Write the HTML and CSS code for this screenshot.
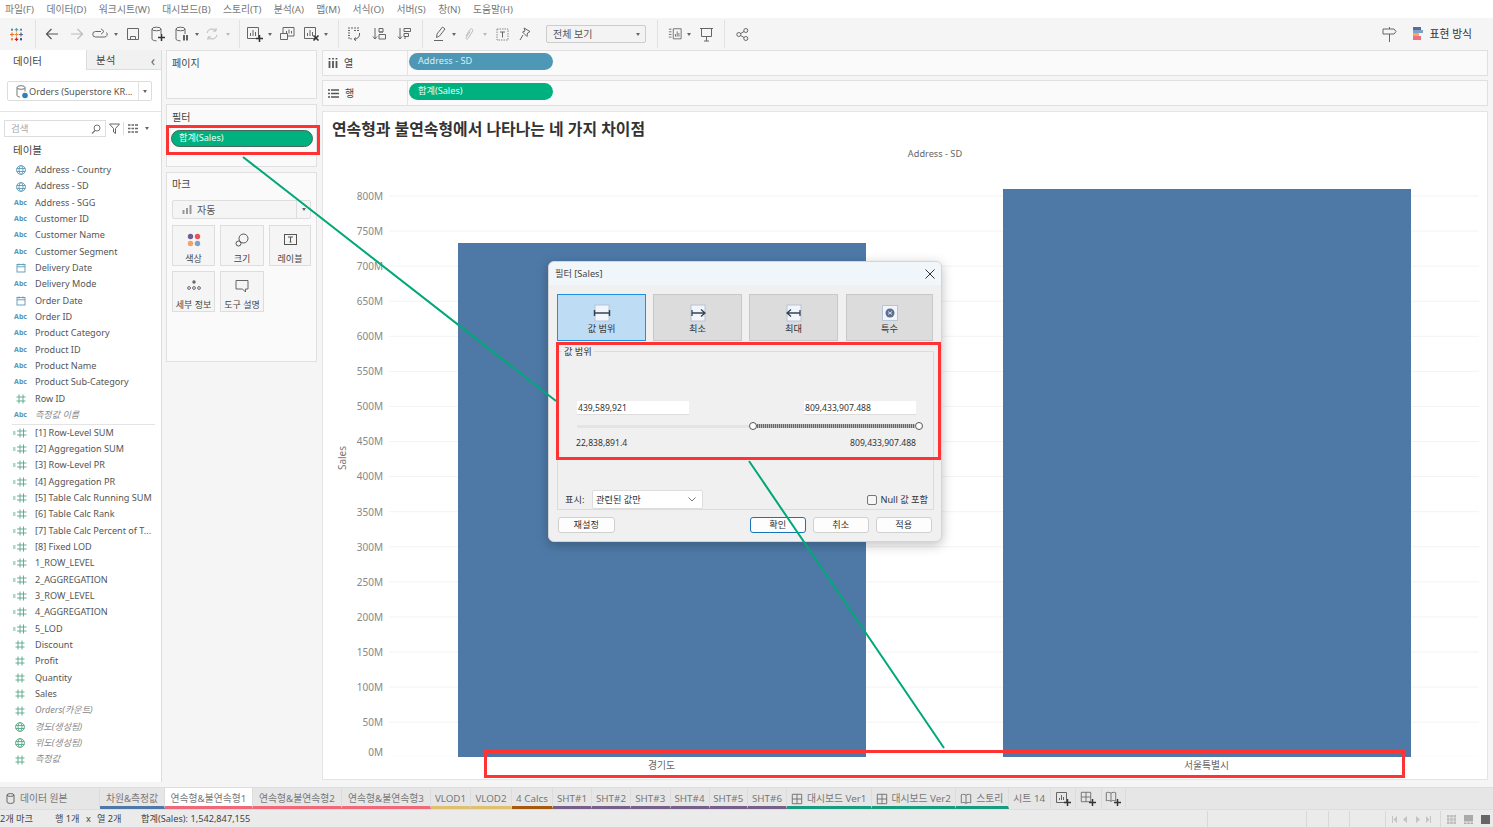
FILE: index.html
```html
<!DOCTYPE html>
<html lang="ko">
<head>
<meta charset="utf-8">
<title>Tableau</title>
<link rel="stylesheet" href="styles.css">
</head>
<body>
<svg class="defs" width="0" height="0">
  <defs>
    <symbol id="hash" viewBox="0 0 10 10"><path d="M3 .5v9M7 .5v9M.5 3h9M.5 7h9" fill="none" stroke="currentColor" stroke-width=".9"/></symbol>
    <symbol id="calc" viewBox="0 0 14 10"><path d="M0 4h2.500M0 6h2.500" stroke="#58b08c" stroke-width="1"/><path d="M7 .5v9M10.500 .5v9M4 3h9.500M4 7h9.500" fill="none" stroke="currentColor" stroke-width=".9"/></symbol>
    <symbol id="globe" viewBox="0 0 10 10"><g fill="none" stroke="currentColor" stroke-width=".9"><circle cx="5" cy="5" r="4.400"/><ellipse cx="5" cy="5" rx="2" ry="4.400"/><path d="M.6 3.500h8.800M.6 6.500h8.800"/></g></symbol>
    <symbol id="cal" viewBox="0 0 10 10"><g fill="none" stroke="currentColor" stroke-width=".9"><rect x="1" y="1.500" width="8" height="7.500"/><path d="M1 3.800h8M3 .5v2M7 .5v2"/></g></symbol>
    <symbol id="db" viewBox="0 0 16 16"><g fill="none" stroke="#666" stroke-width="1"><ellipse cx="6.500" cy="3" rx="4.500" ry="1.800"/><path d="M2 3v10c0 1 2 1.800 4.500 1.800M11 3v5"/></g></symbol>
    <symbol id="grid" viewBox="0 0 14 14"><path d="M1.500 1.500h11v11h-11zM1.500 7h11M7 1.500v11" fill="none" stroke="#666"/></symbol>
    <symbol id="plus" viewBox="0 0 7 7"><path d="M3.500 0v7M0 3.500h7" stroke="#333" stroke-width="1.500"/></symbol>
    <symbol id="book" viewBox="0 0 14 14"><path d="M1.500 2c2-.8 4-.6 5.500.6C8.500 1.400 10.500 1.200 12.500 2v9.500c-2-.8-4-.6-5.500.6-1.500-1.200-3.500-1.400-5.500-.6zM7 2.600v9.500" fill="none" stroke="#666"/></symbol>
  </defs>
</svg>

<div class="app">
  <nav class="menu">
    <span>파일(F)</span><span>데이터(D)</span><span>워크시트(W)</span><span>대시보드(B)</span><span>스토리(T)</span><span>분석(A)</span><span>맵(M)</span><span>서식(O)</span><span>서버(S)</span><span>창(N)</span><span>도움말(H)</span>
  </nav>

  <div class="toolbar">
    <div class="tools">
      <span class="t"><svg width="15" height="15" viewBox="0 0 15 15"><g stroke-width="1.200" fill="none"><path d="M7.500 1v3.500M5.800 2.700h3.400" stroke="#7099a6"/><path d="M7.500 10.500V14M5.800 12.300h3.400" stroke="#c72037"/><path d="M3 5.500v4M1 7.500h4" stroke="#e8762c"/><path d="M12 5.500v4M10 7.500h4" stroke="#5b6591"/><path d="M7.500 5.500v4M5.500 7.500h4" stroke="#eb912b"/><path d="M3 1.500v2.500M2 2.700h2M12 1.500v2.500M11 2.700h2" stroke="#59879b"/><path d="M3 11v2.500M2 12.200h2" stroke="#e8762c"/><path d="M12 11v2.500M11 12.200h2" stroke="#1f447e"/></g></svg></span>
      <span class="t"><i class="sep"></i></span>
      <span class="t"><svg width="14" height="14" viewBox="0 0 14 14"><path d="M13 7H1.500M6.500 2l-5 5 5 5" fill="none" stroke="#555" stroke-width="1.200"/></svg></span>
      <span class="t"><svg width="14" height="14" viewBox="0 0 14 14"><path d="M1 7h11.500M7.500 2l5 5-5 5" fill="none" stroke="#bbb" stroke-width="1.200"/></svg></span>
      <span class="t"><svg width="16" height="12" viewBox="0 0 16 12"><path d="M9 3.500H3.500a2.700 2.700 0 0 0 0 5.500h9a2.700 2.700 0 0 0 2-4.500M9 .8l3 2.700-3 2.700" fill="none" stroke="#666"/></svg></span>
      <span class="t"><b class="caret"></b></span>
      <span class="t"><svg width="14" height="14" viewBox="0 0 14 14"><path d="M1.500 1.500h11v11h-11zM4.500 12.500V9.500h5v3" fill="none" stroke="#666"/></svg></span>
      <span class="t"><svg width="16" height="16" viewBox="0 0 16 16"><use href="#db" width="16" height="16"/><use href="#plus" x="8" y="8" width="7" height="7"/></svg></span>
      <span class="t"><svg width="16" height="16" viewBox="0 0 16 16"><use href="#db" width="16" height="16"/><path d="M10 9v5.500M13 9v5.500" stroke="#333" stroke-width="1.500"/></svg></span>
      <span class="t"><b class="caret"></b></span>
      <span class="t"><svg width="14" height="14" viewBox="0 0 14 14"><path d="M2 6a5 5 0 0 1 9-2M12 8a5 5 0 0 1-9 2M11 1v3H8M3 13v-3h3" fill="none" stroke="#bbb"/></svg></span>
      <span class="t"><b class="caret light"></b></span>
      <span class="t"><i class="sep"></i></span>
      <span class="t"><svg width="17" height="16" viewBox="0 0 17 16"><path d="M1.500 1.500h11v11h-11zM4.500 10V7M7 10V4M9.500 10V6" fill="none" stroke="#666"/><use href="#plus" x="10" y="9" width="7" height="7"/></svg></span>
      <span class="t"><b class="caret"></b></span>
      <span class="t"><svg width="15" height="14" viewBox="0 0 15 14"><path d="M.5 6.500h7v6h-7zM3 6.500V.5h11v8.500H7.500M6.500 6V4M9 6.500V2.500M11.500 6.500V4" fill="none" stroke="#666"/></svg></span>
      <span class="t"><svg width="17" height="16" viewBox="0 0 17 16"><path d="M1.500 1.500h11v11h-11zM4.500 10V7M7 10V4M9.500 10V6" fill="none" stroke="#666"/><path d="M10.500 9.500l5 5M15.500 9.500l-5 5" stroke="#333" stroke-width="1.600"/></svg></span>
      <span class="t"><b class="caret"></b></span>
      <span class="t"><i class="sep"></i></span>
      <span class="t"><svg width="14" height="14" viewBox="0 0 14 14"><path d="M1 1h2M4 1h2M7 1h2M10 1h2M1 3.500h2M7 3.500h2M10 3.500h2M1 6h2M1 8.500h2M1 11h2" fill="none" stroke="#666"/><path d="M12.500 6c.5 3-1.500 6-5 6.200M9 10.500l-2 1.700 2 1.500M4 11v1.500" fill="none" stroke="#555"/></svg></span>
      <span class="t"><svg width="14" height="14" viewBox="0 0 14 14"><path d="M3 1v11M1 9.500l2 2.500 2-2.500M7 1.500h4v3.500H7zM7 5h4M7 7.500h6.500v4.500H7z" fill="none" stroke="#666"/></svg></span>
      <span class="t"><svg width="14" height="14" viewBox="0 0 14 14"><path d="M3 1v11M1 9.500l2 2.500 2-2.500M7 1.500h6.500v3H7zM7 6.500h4.500v3H7zM7 11h2" fill="none" stroke="#666"/></svg></span>
      <span class="t"><i class="sep"></i></span>
      <span class="t"><svg width="14" height="16" viewBox="0 0 14 16"><path d="M3.500 11.500l.5-3.500 5.500-7 2.500 2-5.500 7zM1 14.500h9" fill="none" stroke="#666"/></svg></span>
      <span class="t"><b class="caret"></b></span>
      <span class="t"><svg width="12" height="15" viewBox="0 0 12 15"><path d="M3 9l4-6.500c1-1.500 3.500-.2 2.700 1.500L5 11.500c-.8 1.200-2.500.2-1.800-1L7 4.500" fill="none" stroke="#bbb"/></svg></span>
      <span class="t"><b class="caret light"></b></span>
      <span class="t"><svg width="13" height="13" viewBox="0 0 13 13"><path d="M1 1h11v11H1z" fill="none" stroke="#888" stroke-dasharray="1.500 1"/><path d="M4 4h5M6.500 4v5.500" fill="none" stroke="#666"/></svg></span>
      <span class="t"><svg width="13" height="14" viewBox="0 0 13 14"><path d="M5 1l6 3.500-2.500 1.500-.5 3.500-4.500-4.500 2.500-1zM4 8l-3 5" fill="none" stroke="#666"/></svg></span>
      <span class="t view"><span class="viewsel"><span class="viewtxt">전체 보기</span><b class="caret"></b></span></span>
      <span class="t"><i class="sep"></i></span>
      <span class="t"><svg width="16" height="14" viewBox="0 0 16 14"><path d="M1 1.500h3M1 4.500h3M1 7.500h3M1 10.500h3M6 1h9v11.500H6zM8.500 10V7M10.500 10V4M12.500 10V6" fill="none" stroke="#666"/></svg></span>
      <span class="t"><b class="caret"></b></span>
      <span class="t"><svg width="15" height="15" viewBox="0 0 15 15"><path d="M1 1.500h13M2.500 1.500v8h10v-8M7.500 9.500v4.500M5 14h5" fill="none" stroke="#666"/></svg></span>
      <span class="t"><i class="sep"></i></span>
      <span class="t"><svg width="13" height="13" viewBox="0 0 13 13"><g fill="none" stroke="#666"><circle cx="2.800" cy="6.500" r="2"/><circle cx="9.800" cy="2.500" r="2"/><circle cx="9.800" cy="10.500" r="2"/><path d="M4.600 5.500l3.400-2M4.600 7.500l3.400 2"/></g></svg></span>
    </div>
    <div class="tools-right">
      <svg width="15" height="15" viewBox="0 0 15 15"><path d="M7.500 0v2M1 2h11l2 2.500-2 2.500H1zM7.500 7v8" fill="none" stroke="#666"/></svg>
      <span class="showme">
        <svg width="11" height="14" viewBox="0 0 11 14"><rect width="8" height="3" fill="#5b6a9a"/><rect y="3" width="10" height="3" fill="#7da1c4"/><rect y="6" width="6" height="3" fill="#f0a76f"/><rect y="9" width="8" height="4" fill="#ee6f7e"/></svg>
        <span>표현 방식</span>
      </span>
    </div>
  </div>

  <div class="main">
    <aside class="datapane">
      <div class="dtabs">
        <span class="dtab on">데이터</span>
        <span class="dtab off">분석<b class="chev">‹</b></span>
      </div>
      <div class="dsrow">
        <div class="dssel">
          <span class="dsname"><svg width="12" height="14" viewBox="0 0 12 14"><g fill="none" stroke="#777"><ellipse cx="5" cy="2.500" rx="4" ry="1.800"/><path d="M1 2.500v8c0 1 2 1.500 3 1.500M9 2.500v4"/></g><circle cx="9" cy="10.500" r="2.800" fill="#2f7fb8"/></svg>Orders (Superstore KR...</span>
          <span class="dsarrow"><b class="caret"></b></span>
        </div>
      </div>
      <div class="searchrow">
        <div class="search"><span>검색</span><svg width="10" height="10" viewBox="0 0 10 10"><circle cx="6" cy="4" r="3" fill="none" stroke="#777"/><path d="M4 6.500L1 9.500" stroke="#777" stroke-width="1.200"/></svg></div>
        <svg width="11" height="11" viewBox="0 0 11 11"><path d="M.5 1h10L6.500 5.500v5l-2-1.500V5.500z" fill="none" stroke="#666"/></svg>
        <i class="vsep"></i>
        <svg width="10" height="9" viewBox="0 0 10 9"><path d="M0 1h2.500M3.500 1h2.500M7 1h3M0 4.500h2.500M3.500 4.500h2.500M7 4.500h3M0 8h2.500M3.500 8h2.500M7 8h3" stroke="#666" stroke-width="1.500"/></svg>
        <b class="caret"></b>
      </div>
      <div class="tbl">테이블</div>
      <ul class="fields">
        <li><span class="ic blue"><svg width="10" height="10"><use href="#globe"/></svg></span>Address - Country</li>
        <li><span class="ic blue"><svg width="10" height="10"><use href="#globe"/></svg></span>Address - SD</li>
        <li><span class="ic abc">Abc</span>Address - SGG</li>
        <li><span class="ic abc">Abc</span>Customer ID</li>
        <li><span class="ic abc">Abc</span>Customer Name</li>
        <li><span class="ic abc">Abc</span>Customer Segment</li>
        <li><span class="ic blue"><svg width="10" height="10"><use href="#cal"/></svg></span>Delivery Date</li>
        <li><span class="ic abc">Abc</span>Delivery Mode</li>
        <li><span class="ic blue"><svg width="10" height="10"><use href="#cal"/></svg></span>Order Date</li>
        <li><span class="ic abc">Abc</span>Order ID</li>
        <li><span class="ic abc">Abc</span>Product Category</li>
        <li><span class="ic abc">Abc</span>Product ID</li>
        <li><span class="ic abc">Abc</span>Product Name</li>
        <li><span class="ic abc">Abc</span>Product Sub-Category</li>
        <li><span class="ic green"><svg width="10" height="10"><use href="#hash"/></svg></span>Row ID</li>
        <li class="it"><span class="ic abc">Abc</span>측정값 이름</li>
      </ul>
      <ul class="fields second">
        <li><span class="ic green"><svg width="14" height="10"><use href="#calc"/></svg></span>[1] Row-Level SUM</li>
        <li><span class="ic green"><svg width="14" height="10"><use href="#calc"/></svg></span>[2] Aggregation SUM</li>
        <li><span class="ic green"><svg width="14" height="10"><use href="#calc"/></svg></span>[3] Row-Level PR</li>
        <li><span class="ic green"><svg width="14" height="10"><use href="#calc"/></svg></span>[4] Aggregation PR</li>
        <li><span class="ic green"><svg width="14" height="10"><use href="#calc"/></svg></span>[5] Table Calc Running SUM</li>
        <li><span class="ic green"><svg width="14" height="10"><use href="#calc"/></svg></span>[6] Table Calc Rank</li>
        <li><span class="ic green"><svg width="14" height="10"><use href="#calc"/></svg></span>[7] Table Calc Percent of T...</li>
        <li><span class="ic green"><svg width="14" height="10"><use href="#calc"/></svg></span>[8] Fixed LOD</li>
        <li><span class="ic green"><svg width="14" height="10"><use href="#calc"/></svg></span>1_ROW_LEVEL</li>
        <li><span class="ic green"><svg width="14" height="10"><use href="#calc"/></svg></span>2_AGGREGATION</li>
        <li><span class="ic green"><svg width="14" height="10"><use href="#calc"/></svg></span>3_ROW_LEVEL</li>
        <li><span class="ic green"><svg width="14" height="10"><use href="#calc"/></svg></span>4_AGGREGATION</li>
        <li><span class="ic green"><svg width="14" height="10"><use href="#calc"/></svg></span>5_LOD</li>
        <li><span class="ic green"><svg width="10" height="10"><use href="#hash"/></svg></span>Discount</li>
        <li><span class="ic green"><svg width="10" height="10"><use href="#hash"/></svg></span>Profit</li>
        <li><span class="ic green"><svg width="10" height="10"><use href="#hash"/></svg></span>Quantity</li>
        <li><span class="ic green"><svg width="10" height="10"><use href="#hash"/></svg></span>Sales</li>
        <li class="it"><span class="ic green"><svg width="10" height="10"><use href="#hash"/></svg></span>Orders(카운트)</li>
        <li class="it"><span class="ic green"><svg width="10" height="10"><use href="#globe"/></svg></span>경도(생성됨)</li>
        <li class="it"><span class="ic green"><svg width="10" height="10"><use href="#globe"/></svg></span>위도(생성됨)</li>
        <li class="it"><span class="ic green"><svg width="10" height="10"><use href="#hash"/></svg></span>측정값</li>
      </ul>
    </aside>

    <section class="cards">
      <div class="card pages"><h4>페이지</h4></div>
      <div class="card filters">
        <h4>필터</h4>
        <div class="fpill">합계(Sales)</div>
      </div>
      <div class="card marks">
        <h4>마크</h4>
        <div class="marksel">
          <span class="marktype"><svg width="10" height="9" viewBox="0 0 10 9"><path d="M1.500 9V5M5 9V3M8.500 9V0" stroke="#999" stroke-width="2"/></svg>자동</span>
          <span class="markarrow"><b class="caret"></b></span>
        </div>
        <div class="markgrid">
          <div class="mk"><svg width="14" height="14" viewBox="0 0 14 14"><circle cx="3.500" cy="3.500" r="2.700" fill="#6f5f92"/><circle cx="10.500" cy="3.500" r="2.700" fill="#e5555f"/><circle cx="3.500" cy="10.500" r="2.700" fill="#f0a36b"/><circle cx="10.500" cy="10.500" r="2.700" fill="#7da1cf"/></svg><span>색상</span></div>
          <div class="mk"><svg width="14" height="14" viewBox="0 0 14 14"><g fill="none" stroke="#555"><circle cx="8.500" cy="5.500" r="4.500"/><circle cx="3.500" cy="10.500" r="2.500"/></g></svg><span>크기</span></div>
          <div class="mk"><svg width="13" height="13" viewBox="0 0 13 13"><rect x=".5" y="1.500" width="12" height="10" fill="none" stroke="#555"/><path d="M4 4h5M6.500 4v5M5.500 9h2" fill="none" stroke="#555"/></svg><span>레이블</span></div>
          <div class="mk"><svg width="14" height="12" viewBox="0 0 14 12"><circle cx="7" cy="3" r="1.700" fill="#666"/><g fill="none" stroke="#666"><circle cx="2" cy="9" r="1.400"/><circle cx="7" cy="9" r="1.400"/><circle cx="12" cy="9" r="1.400"/></g></svg><span>세부 정보</span></div>
          <div class="mk"><svg width="14" height="14" viewBox="0 0 14 14"><path d="M1 1.500h12v8.500h-2.500v3l-3-3H1z" fill="none" stroke="#666"/></svg><span>도구 설명</span></div>
        </div>
      </div>
    </section>

    <section class="work">
      <div class="shelf">
        <div class="shelfhead"><svg width="10" height="10" viewBox="0 0 10 10"><path d="M1.500 3v7M5 3v7M8.500 3v7" stroke="#555" stroke-width="1.800"/><path d="M1.500 0v1.500M5 0v1.500M8.500 0v1.500" stroke="#555" stroke-width="1.800"/></svg><span>열</span></div>
        <div class="pill blue-pill">Address - SD</div>
      </div>
      <div class="shelf">
        <div class="shelfhead"><svg width="11" height="9" viewBox="0 0 11 9"><path d="M0 1h2M3 1h8M0 4.500h2M3 4.500h8M0 8h2M3 8h8" stroke="#555" stroke-width="1.300"/></svg><span>행</span></div>
        <div class="pill green-pill">합계(Sales)</div>
      </div>
      <div class="canvas">
        <h1 class="title">연속형과 불연속형에서 나타나는 네 가지 차이점</h1>
        <div class="colhead">Address - SD</div>
        <div class="viz">
          <div class="axtitle"><span>Sales</span></div>
          <div class="yaxis">
            <span>800M</span><span>750M</span><span>700M</span><span>650M</span><span>600M</span><span>550M</span><span>500M</span><span>450M</span><span>400M</span><span>350M</span><span>300M</span><span>250M</span><span>200M</span><span>150M</span><span>100M</span><span>50M</span><span class="zero">0M</span>
          </div>
          <div class="plot">
            <div class="cell"><div class="bar" style="height:514px"></div></div>
            <div class="cell"><div class="bar" style="height:568px"></div></div>
          </div>
        </div>
        <div class="xaxis"><span>경기도</span><span>서울특별시</span></div>
      </div>
    </section>
  </div>

  <div class="tabs">
    <span class="tab src"><svg width="9" height="11" viewBox="0 0 9 11"><g fill="none" stroke="#666"><ellipse cx="4.500" cy="2" rx="3.500" ry="1.400"/><path d="M1 2v7c0 .8 1.500 1.400 3.500 1.400S8 9.800 8 9V2"/></g></svg>데이터 원본</span>
    <span class="tab c-blue">차원&amp;측정값</span>
    <span class="tab c-pink on">연속형&amp;불연속형1</span>
    <span class="tab c-pink">연속형&amp;불연속형2</span>
    <span class="tab c-pink">연속형&amp;불연속형3</span>
    <span class="tab c-yellow">VLOD1</span>
    <span class="tab c-yellow">VLOD2</span>
    <span class="tab c-brown">4 Calcs</span>
    <span class="tab c-purple">SHT#1</span>
    <span class="tab c-purple">SHT#2</span>
    <span class="tab c-purple">SHT#3</span>
    <span class="tab c-purple">SHT#4</span>
    <span class="tab c-purple">SHT#5</span>
    <span class="tab c-purple">SHT#6</span>
    <span class="tab c-teal"><svg width="12" height="12"><use href="#grid"/></svg>대시보드 Ver1</span>
    <span class="tab c-teal"><svg width="12" height="12"><use href="#grid"/></svg>대시보드 Ver2</span>
    <span class="tab c-teal"><svg width="12" height="12"><use href="#book"/></svg>스토리</span>
    <span class="tab">시트 14</span>
    <span class="tab"><svg width="16" height="15" viewBox="0 0 16 15"><path d="M1.500 1.500h10v10h-10zM4.500 9V7M6.500 9V4M8.500 9V6" fill="none" stroke="#666"/><use href="#plus" x="9" y="8" width="7" height="7"/></svg></span>
    <span class="tab"><svg width="16" height="15" viewBox="0 0 16 15"><use href="#grid" width="12" height="12"/><use href="#plus" x="9" y="8" width="7" height="7"/></svg></span>
    <span class="tab"><svg width="16" height="15" viewBox="0 0 16 15"><use href="#book" width="12" height="12"/><use href="#plus" x="9" y="8" width="7" height="7"/></svg></span>
  </div>

  <footer class="status">
    <span class="st1">2개 마크</span><span class="st2">행 1개</span><span class="st3">x</span><span class="st4">열 2개</span><span class="st5">합계(Sales): 1,542,847,155</span>
    <span class="cells">
      <i class="cl c99"></i><i class="cl c22"></i><i class="cl c21"></i><i class="cl c36"></i>
      <span class="pager">
        <svg width="42" height="9" viewBox="0 0 42 9"><g fill="#c4c4c4"><path d="M0 1h1v7H0zM5 1v7L1.500 4.500zM15 1v7l-4-3.500zM24 1v7l4-3.500zM34 1v7l3.500-3.500zM38 1h1v7h-1z"/></g></svg>
      </span>
      <span class="views">
        <svg width="9" height="9" viewBox="0 0 9 9"><path d="M0 0h2.500v2.500H0zM3.250 0h2.500v2.500h-2.500zM6.500 0H9v2.500H6.500zM0 3.250h2.500v2.500H0zM3.250 3.250h2.500v2.500h-2.500zM6.500 3.250H9v2.500H6.500zM0 6.500h2.500V9H0zM3.250 6.500h2.500V9h-2.500zM6.500 6.500H9V9H6.500z" fill="#bbb"/></svg>
        <svg width="9" height="9" viewBox="0 0 9 9"><path d="M0 0h9v6.500H0zM0 7.500h2.500V9H0zM3.250 7.500h2.500V9h-2.500zM6.500 7.500H9V9H6.500z" fill="#aaa"/></svg>
        <svg width="9" height="9" viewBox="0 0 9 9"><path d="M0 0h9v9H0z" fill="#666"/></svg>
      </span>
    </span>
  </footer>
</div>

<div class="dialog">
  <div class="dtitle"><span>필터 [Sales]</span><svg width="10" height="10" viewBox="0 0 10 10"><path d="M.5.500l9 9M9.500.500l-9 9" stroke="#333"/></svg></div>
  <div class="modes">
    <div class="mode sel"><svg width="18" height="18" viewBox="0 0 18 18"><rect x="2" y="1" width="14" height="16" fill="#f2f5fb" stroke="#b8c4d8"/><path d="M2 9h14" stroke="#345" stroke-width="1.500"/><path d="M1.500 6v6M16.500 6v6" stroke="#345" stroke-width="1.500"/></svg><span>값 범위</span></div>
    <div class="mode"><svg width="18" height="18" viewBox="0 0 18 18"><rect x="2" y="1" width="14" height="16" fill="#f2f5fb" stroke="#b8c4d8"/><path d="M3 6v6M3 9h13M12 5.500l4 3.500-4 3.500" fill="none" stroke="#345" stroke-width="1.300"/></svg><span>최소</span></div>
    <div class="mode"><svg width="18" height="18" viewBox="0 0 18 18"><rect x="2" y="1" width="14" height="16" fill="#f2f5fb" stroke="#b8c4d8"/><path d="M15 6v6M15 9H2M6 5.500L2 9l4 3.500" fill="none" stroke="#345" stroke-width="1.300"/></svg><span>최대</span></div>
    <div class="mode last"><svg width="18" height="18" viewBox="0 0 18 18"><rect x="1.500" y="1.500" width="15" height="15" fill="#f2f5fb" stroke="#b8c4d8"/><circle cx="9" cy="9" r="4.500" fill="#5d6f8f"/><path d="M7 7.500l4 3M11 7.500l-4 3" stroke="#dde" stroke-width="1"/></svg><span>특수</span></div>
  </div>
  <fieldset class="group">
    <legend>값 범위</legend>
    <div class="inputs"><span class="num">439,589,921</span><span class="num">809,433,907.488</span></div>
    <div class="slider">
      <i class="track"></i><i class="thumb"></i><i class="range"></i><i class="thumb"></i>
    </div>
    <div class="bounds"><span>22,838,891.4</span><span>809,433,907.488</span></div>
    <div class="showrow">
      <span class="showlabel">표시:</span>
      <span class="combo"><span>관련된 값만</span><svg width="8" height="5" viewBox="0 0 8 5"><path d="M.5.500L4 4 7.500.500" fill="none" stroke="#777"/></svg></span>
      <span class="nullwrap"><i class="check"></i>Null 값 포함</span>
    </div>
  </fieldset>
  <div class="btns">
    <button class="btn">재설정</button>
    <span class="btnright">
      <button class="btn primary">확인</button>
      <button class="btn">취소</button>
      <button class="btn">적용</button>
    </span>
  </div>
</div>

<div class="redbox rb1"></div>
<div class="redbox rb2"></div>
<div class="redbox rb3"></div>
<svg class="arrows" width="1493" height="827" viewBox="0 0 1493 827">
  <path d="M243 157L556 401M749 461L944 748" stroke="#00a878" stroke-width="2" fill="none"/>
</svg>
</body>
</html>
```

FILE: styles.css
```css
* { box-sizing: border-box; }
html, body { margin: 0; padding: 0; }
body {
  width: 1493px; height: 827px; overflow: hidden; position: relative;
  font: 10px/1.2 "Noto Sans", "Noto Sans CJK KR", sans-serif;
  color: #555; background: #f5f5f5;
}
.defs { position: absolute; }
.app { display: flex; flex-direction: column; height: 827px; }

.menu { height: 18px; background: #fff; display: flex; gap: 12.400px; padding: 3px 0 0 5px; color: #777; font-size: 9.800px; line-height: 14px; }

.toolbar { height: 32px; background: #f5f5f5; display: flex; justify-content: space-between; align-items: center; }
.tools {
  display: grid; height: 32px; margin-left: 4px;
  grid-template-columns: 24px 14px 20px 30px 16px 16px 18px 32px 16px 14px 16px 16px 6px 24px 8px 26px 22px 8px 16px 16px 34px 16px 20px 16px 12px 18px 14px 20px 26px 108px 22px 14px 14px 20px 16px 20px;
}
.t { display: flex; align-items: center; justify-content: center; }
.sep { display: block; width: 1px; height: 28px; background: #e2e2e2; }
.caret { display: inline-block; width: 0; height: 0; border: 2.500px solid transparent; border-top: 3px solid #666; border-bottom: 0; }
.caret.light { border-top-color: #bbb; }
.view { justify-content: flex-end; }
.viewsel { width: 100px; height: 18px; border: 1px solid #ccc; border-radius: 2px; background: #f3f3f3; display: flex; align-items: center; justify-content: space-between; padding: 0 5px 0 6px; color: #555; }
.tools-right { display: flex; align-items: center; gap: 16px; margin-right: 21px; }
.showme { display: flex; align-items: center; gap: 5px; color: #333; font-size: 10.800px; }

.main { flex: 1; display: flex; min-height: 0; background: #f5f5f5; }

.datapane { width: 162px; background: #fff; border-right: 1px solid #ddd; flex: none; }
.dtabs { display: flex; height: 20px; }
.dtab { display: flex; align-items: center; font-size: 10.500px; color: #444; padding-top: 2px; }
.dtab.on { width: 86px; padding-left: 13px; background: #fff; }
.dtab.off { flex: 1; padding-left: 9px; background: #f1f1f1; border-left: 1px solid #ddd; border-bottom: 1px solid #ddd; justify-content: space-between; padding-right: 6px; }
.chev { font-weight: 400; font-size: 14px; color: #666; line-height: 14px; }
.dsrow { height: 42px; padding: 11px 9px 0 7px; border-bottom: 1px solid #e4e4e4; }
.dssel { height: 20px; border: 1px solid #ddd; display: flex; align-items: stretch; justify-content: space-between; padding: 0 0 0 8px; border-radius: 2px; }
.dsname { display: flex; align-items: center; gap: 1px; color: #555; font-size: 9.200px; padding-top: 1px; }
.dsarrow { width: 13px; border-left: 1px solid #e4e4e4; display: flex; align-items: center; justify-content: center; }
.searchrow { display: flex; align-items: center; height: 17px; margin: 8px 0 0 4px; gap: 3px; }
.search { width: 102px; height: 17px; border: 1px solid #ddd; display: flex; align-items: center; justify-content: space-between; padding: 1px 4px 0 6px; color: #aaa; font-size: 9.500px; }
.vsep { width: 1px; height: 13px; background: #ddd; margin: 0 1px 0 0; }
.searchrow .caret { margin-left: 4px; }
.tbl { margin: 6px 0 0 13px; font-size: 10.500px; color: #444; line-height: 14px; height: 16px; }

.fields { list-style: none; margin: 3px 0 0; padding: 0; font-size: 9.100px; }
.fields li { height: 16.350px; line-height: 16.350px; padding-left: 35px; position: relative; color: #555; white-space: nowrap; display: flex; align-items: center; }
.fields.second { margin: 0 6px 0 12px; border-top: 1px solid #e4e4e4; padding-top: 0; }
.fields.second li { padding-left: 23px; }
.fields li.it { font-style: italic; color: #888; }
.ic { position: absolute; left: 14px; width: 13px; display: flex; justify-content: center; align-items: center; }
.second .ic { left: 0; width: 16px; }
.green { color: #55a887; }
.blue { color: #5b9ab8; }
.abc { color: #5b97b5; font-size: 7px; font-weight: 700; font-style: normal; }

.cards { width: 155px; flex: none; padding: 0 0 0 4px; display: flex; flex-direction: column; gap: 5px; }
.card { background: #fafafa; border: 1px solid #e0e0e0; width: 151px; }
.card h4 { margin: 0; font-weight: 400; font-size: 10px; color: #444; padding: 6px 0 0 5px; line-height: 12px; }
.pages { height: 49px; }
.filters { height: 63px; }
.fpill { margin: 7px 3px 0 4px; height: 17px; background: #00b180; border: 1px solid #45685c; border-radius: 9px; color: #eafff6; padding-left: 7px; line-height: 14px; font-size: 9.200px; }
.marks { height: 190px; }
.marks h4 { padding-top: 5px; }
.marksel { margin: 10px 5px 0 5px; height: 19px; border: 1px solid #ddd; border-radius: 2px; display: flex; background: #f5f5f5; }
.marktype { flex: 1; display: flex; align-items: center; gap: 5px; padding-left: 9px; color: #555; }
.markarrow { width: 14px; border-left: 1px solid #ddd; display: flex; align-items: center; justify-content: center; }
.markgrid { display: grid; grid-template-columns: 43px 44px 42px; gap: 5px; margin: 6px 0 0 5px; }
.mk { height: 41px; background: #f5f5f5; border: 1px solid #ddd; display: flex; flex-direction: column; align-items: center; justify-content: space-between; padding: 7px 0 1px; color: #444; font-size: 9px; line-height: 11px; white-space: nowrap; }

.work { flex: 1; display: flex; flex-direction: column; margin: 0 5px 0 5px; min-width: 0; }
.shelf { height: 26px; border: 1px solid #e0e0e0; background: #fafafa; margin-bottom: 4px; display: flex; }
.shelf + .shelf { height: 26px; margin-bottom: 5px; }
.shelfhead { width: 85px; border-right: 1px solid #e4e4e4; display: flex; align-items: center; gap: 6px; padding-left: 5px; color: #444; }
.pill { margin: 2px 0 0 1px; width: 144px; height: 17px; border-radius: 9px; padding-left: 9px; line-height: 15px; font-size: 9.200px; color: #d8eef5; }
.blue-pill { background: #4e97b5; }
.green-pill { background: #00b180; color: #e6fff6; }

.canvas { flex: 1; background: #fff; border: 1px solid #e4e4e4; display: flex; flex-direction: column; min-height: 0; margin-bottom: 2px; }
.title { margin: 0; padding: 7px 0 0 9px; height: 33px; font-size: 15.900px; line-height: 20px; font-weight: 700; color: #333; white-space: nowrap; }
.colhead { height: 35px; text-align: center; padding: 3px 0 0 0; font-size: 9.200px; color: #666; line-height: 13px; margin-left: 68px; margin-right: 8px; }
.viz { display: flex; height: 579px; }
.axtitle { width: 30px; display: flex; align-items: center; justify-content: center; color: #777; padding: 0 0 18px 8px; }
.axtitle span { transform: rotate(-90deg); }
.yaxis { width: 31px; display: flex; flex-direction: column; align-items: flex-end; padding: 1px 1px 0 0; }
.yaxis span { height: 35.080px; line-height: 35.080px; flex: none; color: #888; font-size: 10px; }
.yaxis .zero { margin-top: -5px; }
.plot { flex: 1; margin-left: 5px; margin-right: 8px; display: flex; align-items: flex-end; background-image: linear-gradient(to bottom, #f3f3f3 1px, transparent 1px); background-size: 100% 35.080px; background-position: 0 17.500px; }
.cell { flex: 1; display: flex; justify-content: center; align-items: flex-end; height: 100%; }
.bar { width: 408px; background: #4e79a7; }
.xaxis { display: flex; margin-left: 66px; margin-right: 8px; height: 23px; }
.xaxis span { flex: 1; text-align: center; color: #666; padding-top: 2px; font-size: 9.800px; line-height: 14px; }

.tabs {
  height: 22px; margin-top: 5px; display: grid; background: #e6e6e6; border-top: 1px solid #ddd;
  grid-template-columns: 100px 65px 88px 89px 89px 40px 41px 41px 39px 39px 39.500px 39px 38.500px 39px 84.500px 84.500px 52.500px 42.500px 25px 25.500px 24.500px;
}
.tab { display: flex; align-items: center; justify-content: center; gap: 4px; color: #777; font-size: 9.800px; white-space: nowrap; border-right: 1px solid #dcdcdc; border-bottom: 3px solid transparent; padding-top: 3px; }
.tab.src { justify-content: flex-start; padding-left: 6px; gap: 5px; }
.tab.on { background: #fff; }
.c-blue { border-bottom-color: #4e79a7; }
.c-pink { border-bottom-color: #f0697b; }
.c-yellow { border-bottom-color: #e0c070; }
.c-brown { border-bottom-color: #a65a10; }
.c-purple { border-bottom-color: #76608a; }
.c-teal { border-bottom-color: #1a9a7f; }

.status { height: 18px; background: #ebebeb; display: flex; align-items: center; color: #444; font-size: 9.200px; border-top: 1px solid #ddd; padding-top: 1px; }
.st1 { width: 55px; }
.st2 { width: 31px; }
.st3 { width: 11px; }
.st4 { width: 44px; }
.cells { margin-left: auto; display: flex; height: 16px; align-self: flex-start; }
.cl { display: block; border-left: 1px solid #d8d8d8; }
.c99 { width: 99px; }
.c22 { width: 22px; }
.c21 { width: 21px; }
.c36 { width: 36px; }
.pager { width: 55px; border-left: 1px solid #d8d8d8; display: flex; align-items: center; justify-content: center; }
.views { width: 53px; border-left: 1px solid #d8d8d8; display: flex; align-items: center; gap: 8px; padding-left: 6px; }

.dialog {
  position: absolute; left: 548px; top: 261px; width: 394px; height: 281px;
  background: #f0f0f0; border: 1px solid #d4d4d4; border-radius: 6px; overflow: hidden;
  box-shadow: 0 3px 12px rgba(0,0,0,.25); color: #333; font-size: 9.200px;
}
.dtitle { height: 23px; background: #f0f6fa; display: flex; justify-content: space-between; align-items: center; padding: 0 6px 0 6px; color: #444; }
.modes { display: grid; grid-template-columns: 89px 89px 89px 88px; gap: 7px; margin: 9px 0 0 8px; width: 377px; }
.mode { height: 47px; background: #dcdcdc; border: 1px solid #c8c8c8; display: flex; flex-direction: column; align-items: center; padding-top: 9px; gap: 1px; line-height: 12px; }
.mode.sel { background: #bfdcf5; border-color: #1f8fe0; }
.mode.last { margin-left: 1px; }
.group { margin: 5px 0 0 8px; padding: 0; width: 377px; height: 164px; border: 1px solid #dcdcdc; min-inline-size: 0; }
.group legend { padding: 0 2px; margin-left: 4px; line-height: 11px; font-size: 9.200px; }
.inputs { display: flex; justify-content: space-between; margin: 44px 17px 0 19px; }
.num { width: 112px; height: 14px; background: #fff; border-bottom: 1px solid #ddd; padding-left: 1px; line-height: 15px; color: #333; font-size: 8.600px; }
.slider { display: flex; align-items: center; margin: 7px 0 0 19px; width: 347px; height: 8px; }
.track { width: 172px; height: 3px; background: #e4e4e4; }
.thumb { width: 8px; height: 8px; border: 1px solid #555; border-radius: 50%; background: #fff; flex: none; }
.range { width: 158px; height: 4px; background: repeating-linear-gradient(90deg, #666 0 1px, #bbb 1px 2px); }
.bounds { display: flex; justify-content: space-between; margin: 7px 17px 0 18px; line-height: 13px; color: #333; font-size: 8.600px; }
.showrow { display: flex; align-items: center; margin: 40px 5px 0 7px; height: 19px; }
.showlabel { width: 27px; }
.combo { width: 111px; height: 19px; background: #fff; border: 1px solid #ddd; border-radius: 2px; display: flex; justify-content: space-between; align-items: center; padding: 0 6px 0 3px; }
.nullwrap { margin-left: auto; display: flex; align-items: center; gap: 3px; }
.check { display: block; width: 10px; height: 10px; background: #f6f6f6; border: 1px solid #777; border-radius: 2px; }
.btns { display: flex; justify-content: space-between; margin: 7px 9px 0 9px; }
.btnright { display: flex; gap: 6.500px; }
.btn { font: inherit; color: #333; width: 56.500px; height: 16px; padding: 0; line-height: 12px; background: #fdfdfd; border: 1px solid #d0d0d0; border-radius: 3px; }
.btn.primary { border: 1px solid #1a73b8; }

.redbox { position: absolute; border: 3px solid #ff3333; }
.rb1 { left: 166px; top: 125px; width: 154px; height: 30px; }
.rb2 { left: 556px; top: 342px; width: 385px; height: 118px; }
.rb3 { left: 484px; top: 750px; width: 921px; height: 28px; }
.arrows { position: absolute; left: 0; top: 0; pointer-events: none; }
```
